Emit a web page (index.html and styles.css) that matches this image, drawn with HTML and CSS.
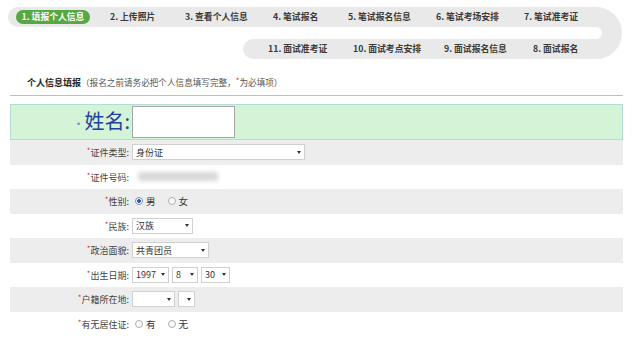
FILE: index.html
```html
<!DOCTYPE html>
<html lang="zh">
<head>
<meta charset="utf-8">
<title>个人信息填报</title>
<link rel="stylesheet" href="styles.css">
</head>
<body>
<div class="nav">
  <svg class="track" width="640" height="64" viewBox="0 0 640 64">
    <path d="M18 17 H596 A16 16 0 0 1 596 49 H253" fill="none" stroke="#e9e9e9" stroke-width="20" stroke-linecap="round"/>
  </svg>
  <div class="steps row1">
    <span class="step active">1. 填报个人信息</span>
    <span class="step">2. 上传照片</span>
    <span class="step">3. 查看个人信息</span>
    <span class="step">4. 笔试报名</span>
    <span class="step">5. 笔试报名信息</span>
    <span class="step">6. 笔试考场安排</span>
    <span class="step">7. 笔试准考证</span>
  </div>
  <div class="steps row2">
    <span class="step">11. 面试准考证</span>
    <span class="step">10. 面试考点安排</span>
    <span class="step">9. 面试报名信息</span>
    <span class="step">8. 面试报名</span>
  </div>
</div>

<div class="content">
  <div class="heading"><b>个人信息填报</b><span class="note">（报名之前请务必把个人信息填写完整，<i class="req">*</i>为必填项）</span></div>

  <div class="name-row">
    <div class="name-label"><span class="dot">·</span>姓名:</div>
    <div class="name-input"></div>
  </div>

  <div class="row gray">
    <div class="label"><i class="req">*</i>证件类型:</div>
    <div class="value"><div class="sel w172"><span>身份证</span><i class="arr"></i></div></div>
  </div>
  <div class="row">
    <div class="label"><i class="req">*</i>证件号码:</div>
    <div class="value"><div class="blur"></div></div>
  </div>
  <div class="row gray">
    <div class="label"><i class="req">*</i>性别:</div>
    <div class="value"><span class="radio on"></span><span class="opt">男</span><span class="radio"></span><span class="opt">女</span></div>
  </div>
  <div class="row">
    <div class="label"><i class="req">*</i>民族:</div>
    <div class="value"><div class="sel w61"><span>汉族</span><i class="arr"></i></div></div>
  </div>
  <div class="row gray">
    <div class="label"><i class="req">*</i>政治面貌:</div>
    <div class="value"><div class="sel w77"><span>共青团员</span><i class="arr"></i></div></div>
  </div>
  <div class="row">
    <div class="label"><i class="req">*</i>出生日期:</div>
    <div class="value">
      <div class="sel w36"><span>1997</span><i class="arr"></i></div>
      <div class="sel w25"><span>8</span><i class="arr"></i></div>
      <div class="sel w29"><span>30</span><i class="arr"></i></div>
    </div>
  </div>
  <div class="row gray">
    <div class="label"><i class="req">*</i>户籍所在地:</div>
    <div class="value">
      <div class="sel w43"><span></span><i class="arr"></i></div>
      <div class="sel w16"><span></span><i class="arr"></i></div>
    </div>
  </div>
  <div class="row">
    <div class="label"><i class="req">*</i>有无居住证:</div>
    <div class="value"><span class="radio"></span><span class="opt">有</span><span class="radio"></span><span class="opt">无</span></div>
  </div>
</div>
</body>
</html>
```

FILE: styles.css
```css
* { box-sizing: border-box; }
body {
  margin: 0;
  background: #fff;
  font-family: "Noto Sans CJK SC", "Liberation Sans", sans-serif;
  color: #333;
  overflow: hidden;
}
.nav {
  position: relative;
  height: 64px;
  padding-top: 10px;
}
.track {
  position: absolute;
  left: 0;
  top: 0;
}
.steps {
  position: relative;
  display: grid;
  align-items: center;
  height: 14px;
}
.row1 {
  padding-left: 16px;
  grid-template-columns: 94px 75px 88px 75px 88px 88px auto;
}
.row2 {
  margin-top: 18px;
  padding-left: 268px;
  grid-template-columns: 85px 91px 89px auto;
}
.step {
  font-size: 8.8px;
  font-weight: 700;
  color: #3a3a3a;
  line-height: 14px;
  white-space: nowrap;
  justify-self: start;
}
.step.active {
  width: 74px;
  text-align: center;
  background: #55a843;
  color: #fff;
  border-radius: 7px;
}
.content {
  margin-left: 10px;
  width: 613px;
}
.heading {
  margin-top: 10px;
  padding-left: 17px;
  font-size: 9px;
  line-height: 14px;
  padding-bottom: 5px;
  border-bottom: 1px solid #bdbdbd;
  color: #222;
}
.heading .note {
  color: #555;
  font-weight: 400;
  font-size: 8.6px;
}
.req {
  color: #e23030;
  font-style: normal;
  font-size: 8px;
  vertical-align: 2px;
}
.name-row {
  margin-top: 8px;
  height: 36px;
  background: #d3f4d6;
  border: 1px solid #b4dcd4;
  display: flex;
  align-items: center;
}
.name-label {
  width: 121px;
  text-align: right;
  padding-right: 2px;
  font-family: "Noto Sans CJK SC", sans-serif;
  font-size: 20px;
  line-height: 24px;
  color: #2440a0;
}
.name-label .dot {
  font-size: 12px;
  color: #7a8fc0;
}
.name-input {
  width: 103px;
  height: 32px;
  background: #fff;
  border: 1px solid #a6a6a6;
}
.row {
  height: 24.5px;
  display: flex;
  align-items: center;
  font-size: 9px;
}
.row.gray { background: #ededed; }
.label {
  width: 121px;
  text-align: right;
  padding-right: 2px;
  color: #444;
  white-space: nowrap;
}
.value {
  display: flex;
  align-items: center;
  gap: 3px;
  padding-left: 1px;
}
.sel {
  height: 16px;
  background: #fff;
  border: 1px solid #d0d0d0;
  display: flex;
  align-items: center;
  justify-content: space-between;
  padding: 0 3px 0 3px;
  font-size: 9px;
  color: #333;
}
.arr {
  width: 0;
  height: 0;
  border-left: 2.5px solid transparent;
  border-right: 2.5px solid transparent;
  border-top: 3px solid #333;
}
.w172 { width: 173px; }
.w61 { width: 61px; }
.w77 { width: 77px; }
.w36 { width: 37px; }
.w25 { width: 26px; }
.w29 { width: 29px; }
.w43 { width: 43px; }
.w16 { width: 17px; }
.blur {
  margin-left: 6px;
  width: 80px;
  height: 9px;
  background: #d8d8d8;
  border-radius: 3px;
  filter: blur(2px);
}
.radio {
  width: 8px;
  height: 8px;
  border-radius: 50%;
  border: 1px solid #b0b0b0;
  background: #f8f8f8;
  margin-left: 3px;
}
.radio.on {
  background: radial-gradient(circle, #2a5aa8 0 1.6px, #fff 2px);
  border-color: #6f8fc0;
}
.opt {
  margin-right: 6px;
  font-size: 9.5px;
  color: #333;
}
```
